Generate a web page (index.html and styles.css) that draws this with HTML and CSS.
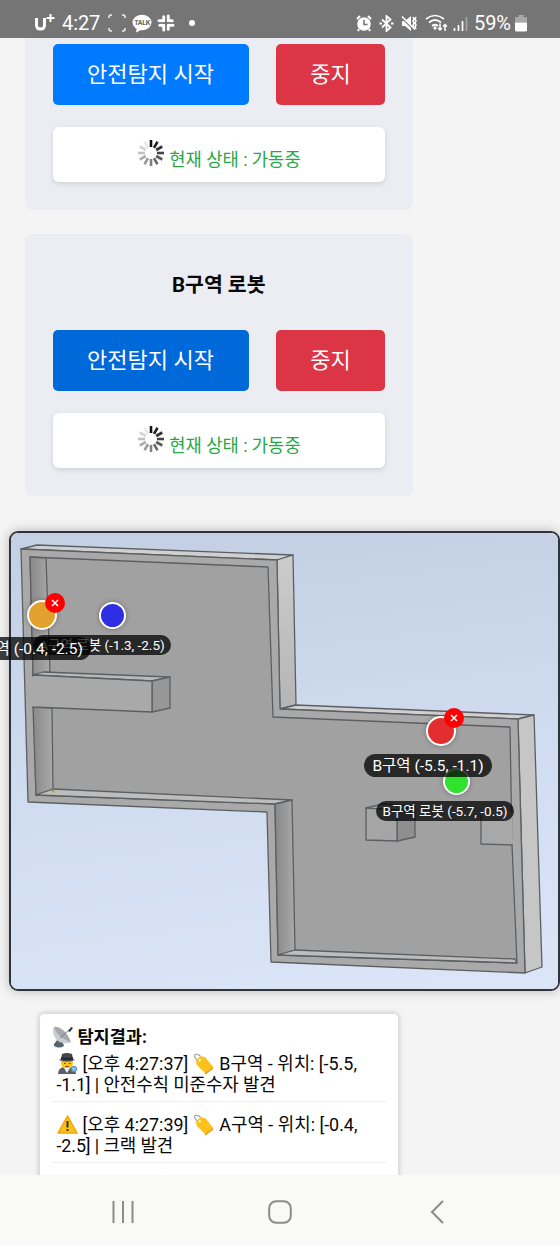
FILE: index.html
```html
<!DOCTYPE html>
<html lang="ko">
<head>
<meta charset="utf-8">
<title>로봇 안전탐지</title>
<link rel="stylesheet" href="styles.css">
</head>
<body>
<svg class="defs" width="0" height="0">
  <defs>
    <g id="spinner" stroke-width="2.6">
      <path d="M14 1v7" stroke="#111"/>
      <path d="M14 1v7" stroke="#222" transform="rotate(30 14 14)"/>
      <path d="M14 1v7" stroke="#333" transform="rotate(60 14 14)"/>
      <path d="M14 1v7" stroke="#444" transform="rotate(90 14 14)"/>
      <path d="M14 1v7" stroke="#5a5a5a" transform="rotate(120 14 14)"/>
      <path d="M14 1v7" stroke="#6c6c6c" transform="rotate(150 14 14)"/>
      <path d="M14 1v7" stroke="#808080" transform="rotate(180 14 14)"/>
      <path d="M14 1v7" stroke="#999" transform="rotate(210 14 14)"/>
      <path d="M14 1v7" stroke="#adadad" transform="rotate(240 14 14)"/>
      <path d="M14 1v7" stroke="#c0c0c0" transform="rotate(270 14 14)"/>
      <path d="M14 1v7" stroke="#d4d4d4" transform="rotate(300 14 14)"/>
      <path d="M14 1v7" stroke="#e8e8e8" transform="rotate(330 14 14)"/>
    </g>
    <g id="tag">
      <path d="M6 8C0 4 1 0 4 1c3 0 5 3 5 6" fill="none" stroke="#aaa" stroke-width="1.3"/>
      <path d="M3 7l5-4 5 1 8 10-8 7L4 12z" fill="#fcc21b"/>
      <path d="M12 21l9-7v2l-8 6z" fill="#e59b12"/>
      <circle cx="7" cy="7" r="1.3" fill="#fff5cf"/>
    </g>
  </defs>
</svg>

<header class="statusbar">
  <svg class="carrier" width="22" height="20" viewBox="0 0 22 20" fill="none" stroke="#fff"><path d="M2.500 5v7q0 4 4 4t4-4V5" stroke-width="3"/><path d="M16.500 1v8M12.500 5h8" stroke-width="2"/></svg>
  <span class="clock">4:27</span>
  <svg class="capture" width="18" height="18" viewBox="0 0 18 18" fill="none" stroke="#eee" stroke-width="1.500"><path d="M1 4V3q0-2 2-2h1M14 1h1q2 0 2 2v1M1 14v1q0 2 2 2h1M14 17h1q2 0 2-2v-1"/></svg>
  <svg class="talk" width="20" height="19" viewBox="0 0 20 19"><ellipse cx="10" cy="8.500" rx="9.500" ry="7.800" fill="#fff"/><path d="M5 13l-1 5.500 6-3z" fill="#fff"/><text x="10" y="11" text-anchor="middle" class="talk-text">TALK</text></svg>
  <svg class="slack" width="18" height="18" viewBox="0 0 18 18" stroke="#fff" stroke-width="3" stroke-linecap="round"><path d="M6.800 2.800v4M11.200 2v4.800M2 6.800h4.800M11.200 6.800h4M2.800 11.200h4M11.200 11.200H16M6.800 11.200V16M11.200 11.200v4"/><path d="M9 0v18M0 9h18" stroke="#757575" stroke-width="1"/></svg>
  <i class="more-dot"></i>
  <div class="status-right">
    <svg width="16" height="17" viewBox="0 0 16 17"><circle cx="8" cy="9" r="6.800" fill="#fff"/><path d="M1 4l3-3M15 4l-3-3M3 14l-1 2M13 14l1 2" stroke="#fff" stroke-width="2"/><path d="M8 5v4.500h3.500" fill="none" stroke="#707070" stroke-width="1.500"/></svg>
    <svg class="bt" width="15" height="17" viewBox="0 0 15 17" fill="none" stroke="#fff" stroke-width="1.800"><path d="M3 4.500l8.500 8L7.500 16V1l4 3.500L3 12.500"/><path d="M.5 8.500H3M12 8.500h2.500"/></svg>
    <svg class="mute" width="17" height="17" viewBox="0 0 17 17" fill="none" stroke="#fff" stroke-width="1.600"><path d="M1 6h3l6-5v15l-6-5H1z" fill="#fff" stroke="none"/><path d="M1 3l12 12" stroke="#757575" stroke-width="1.500"/><path d="M1 1.500l13 13"/><path d="M12 2l1 2-1 2 1 2-1 2 1 2M15 2l-1 2 1 2-1 2 1 2-1 2 1 2"/></svg>
    <svg class="wifi" width="23" height="18" viewBox="0 0 23 18" fill="none" stroke="#fff" stroke-width="1.700"><path d="M1 5q9-7 18 0M4 8.500q6-5 12 0M7 12q3-2.500 6 0"/><circle cx="10" cy="14" r=".8" fill="#fff"/><path d="M15 9.500V16m-2-2l2 2 2-2M20 17v-6.500m-2 2l2-2 2 2" stroke-width="1.500"/></svg>
    <svg class="signal" width="15" height="15" viewBox="0 0 15 15" stroke="#fff" stroke-width="1.700"><path d="M1.500 12v3M5.500 9v6M9.500 5v10"/><path d="M13.500 1v14" stroke="#a5a5a5"/></svg>
    <span class="percent">59%</span>
    <svg class="battery" width="12" height="17" viewBox="0 0 12 17"><path d="M3.500 0h5v2H11q1 0 1 1v4.500H0V3q0-1 1-1h2.500z" fill="#a8a8a8"/><path d="M0 7.500h12V15q0 1.500-1.500 1.500h-9Q0 16.500 0 15z" fill="#fff"/></svg>
  </div>
</header>

<main class="page">
  <section class="card card-cut">
    <div class="actions"><button class="btn start">안전탐지 시작</button><button class="btn stop">중지</button></div>
    <div class="state"><svg width="28" height="28" viewBox="0 0 28 28"><use href="#spinner"/></svg><span>현재 상태 : 가동중</span></div>
  </section>

  <section class="card">
    <h2>B구역 로봇</h2>
    <div class="actions"><button class="btn start pressed">안전탐지 시작</button><button class="btn stop">중지</button></div>
    <div class="state"><svg width="28" height="28" viewBox="0 0 28 28"><use href="#spinner"/></svg><span>현재 상태 : 가동중</span></div>
  </section>

  <section class="map">
    <svg class="plan" width="547" height="456" viewBox="11 533 547 456">
      <defs>
        <linearGradient id="sky" x1=".6" y1="0" x2=".75" y2="1"><stop offset="0" stop-color="#c4d1e5"/><stop offset=".5" stop-color="#d0dcef"/><stop offset="1" stop-color="#dae5f8"/></linearGradient>
        <linearGradient id="wall" x1="0" x2="1"><stop offset="0" stop-color="#888"/><stop offset="1" stop-color="#aaa"/></linearGradient>
        <linearGradient id="side" x1="0" y1="0" x2="0" y2="1"><stop offset="0" stop-color="#ccc"/><stop offset="1" stop-color="#b5b5b5"/></linearGradient>
      </defs>
      <rect x="11" y="533" width="547" height="456" fill="url(#sky)"/>
      <g stroke="#5c5f62" stroke-width="1.300" stroke-linejoin="round">
        <path d="M21 549L37 545 293 555 277 560z" fill="#d0d0d0"/>
        <path d="M277 560L293 555 296 705 280 709z" fill="url(#side)"/>
        <path d="M280 709L296 705 534 715 518 719z" fill="#d0d0d0"/>
        <path d="M518 719L534 715 542 967 525 973z" fill="#c6c6c6"/>
        <path d="M21 549L277 560 280 709 518 719 525 973 271 962 267 812 28 802z" fill="#a9a9a9"/>
        <path d="M30 557L268 567 273 717 510 727 512 845 517 963 278 955 275 804 36 795z" fill="#a1a1a1"/>
        <path d="M30 557l16 1 4 114-17 3z" fill="url(#wall)"/>
        <path d="M33 707l19 1 1 81-17 6z" fill="url(#wall)"/>
        <path d="M36 795l17-6 239 11-17 4z" fill="#bdbdbd"/>
        <path d="M275 804l17-4 3 150-17 5z" fill="url(#wall)"/>
        <path d="M278 955l17-5 220 9 2 4z" fill="#bdbdbd"/>
        <path d="M33 675l10-3 127 5-18 4z" fill="#b9b9b9"/>
        <path d="M152 681l18-4v31l-18 4z" fill="#979797"/>
        <path d="M33 675l119 6v31l-119-5z" fill="#a9a9a9"/>
        <path d="M481 810l29-83 7 3-4 115-32-1z" fill="none" stroke="none"/>
        <path d="M481 812l30 1 1 32-31-1z" fill="#a8a8a8" stroke="none"/>
        <path d="M510.500 812l1 32" stroke="#a8a8a8" stroke-width="3"/>
        <path d="M481 815v29l31 1" fill="none"/>
        <path d="M366 808l17-4 32 2-18 4z" fill="#b5b5b5"/>
        <path d="M397 810l18-4v31l-18 4z" fill="#8f8f8f"/>
        <path d="M366 808l31 2v31l-31-1z" fill="#a5a5a5"/>
      </g>
      <path d="M27.500 678v28l7 .5V676z" fill="#a9a9a9"/>
      <circle cx="53" cy="791" r="1.500" fill="#a4a43d"/>
    </svg>
    <i class="pin robot blue"></i>
    <i class="pin robot green"></i>
    <i class="pin zone orange"></i>
    <i class="pin zone red"></i>
    <span class="label small label-a-robot">A구역 로봇 (-1.3, -2.5)</span>
    <span class="label small label-b-robot">B구역 로봇 (-5.7, -0.5)</span>
    <span class="label label-a">A구역 (-0.4, -2.5)</span>
    <span class="label label-b">B구역 (-5.5, -1.1)</span>
    <span class="close close-a"><svg width="8" height="8" viewBox="0 0 8 8"><path d="M1 1l6 6M7 1L1 7" stroke="#fff" stroke-width="1.500"/></svg></span>
    <span class="close close-b"><svg width="8" height="8" viewBox="0 0 8 8"><path d="M1 1l6 6M7 1L1 7" stroke="#fff" stroke-width="1.500"/></svg></span>
  </section>

  <section class="log">
    <h3><svg width="22" height="22" viewBox="0 0 22 22"><path d="M2 18l4-5 5 4 1 3q-5 3-10 0z" fill="#536570"/><path d="M2 1C-1 6 3 16 11 17q5 1 8-1z" fill="#c9cdd0"/><path d="M2 1q2 6 7 10t10 5Q16 8 11 4T2 1z" fill="#a3a9ad"/><path d="M8 12l9-8" fill="none" stroke="#777f84"/><path d="M16 5l3-4 2 1-3 4z" fill="#363c40"/></svg><span>탐지결과:</span></h3>
    <div class="entry">
      <div class="line"><svg width="21" height="21" viewBox="0 0 21 21"><path d="M1 21q0-6 6-7h6q6 1 6 7z" fill="#596066"/><circle cx="10" cy="10" r="6" fill="#fcc21b"/><path d="M7 15h6l-3 5z" fill="#eee"/><path d="M4 6L5 1q5-2 10 0l1 5 2 1q-8 3-16 0z" fill="#3f474c"/><path d="M4 5q6 2 12 0" fill="none" stroke="#1d2225" stroke-width="1.500"/><path d="M7 10.500h1.500M12 10.500h1.500M8.500 13.500h3" stroke="#553c22"/><circle cx="17" cy="16" r="2.700" fill="#82c5e8" stroke="#5b8daa"/></svg><span>[오후 4:27:37]</span><svg width="21" height="22" viewBox="0 0 22 22"><use href="#tag"/></svg><span>B구역 - 위치: [-5.5,</span></div>
      <div class="line tight"><span>-1.1] | 안전수칙 미준수자 발견</span></div>
    </div>
    <div class="entry second">
      <div class="line"><svg width="21" height="19" viewBox="0 0 21 19"><path d="M10.500 1L20 18H1z" fill="#fcc21b" stroke="#f2a600" stroke-width="1.500" stroke-linejoin="round"/><path d="M10.500 6v6.500M10.500 14v2" stroke="#333" stroke-width="2"/></svg><span>[오후 4:27:39]</span><svg width="21" height="22" viewBox="0 0 22 22"><use href="#tag"/></svg><span>A구역 - 위치: [-0.4,</span></div>
      <div class="line tight"><span>-2.5] | 크랙 발견</span></div>
    </div>
  </section>
</main>

<nav class="navbar">
  <svg width="22" height="24" viewBox="0 0 22 24" stroke="#8b8b8b" stroke-width="2"><path d="M1.500 1v22M11 1v22M20.500 1v22"/></svg>
  <svg class="home" width="24" height="24" viewBox="0 0 24 24" fill="none" stroke="#8b8b8b" stroke-width="2"><rect x="1.200" y="1.200" width="21.600" height="21.600" rx="7"/></svg>
  <svg width="14" height="24" viewBox="0 0 14 24" fill="none" stroke="#8b8b8b" stroke-width="2"><path d="M13 1L2 12l11 11"/></svg>
</nav>
</body>
</html>
```
FILE: styles.css
```css
* { box-sizing: border-box; }
body {
  margin: 0;
  width: 560px;
  height: 1245px;
  overflow: hidden;
  background: #f4f4f4;
  color: #080808;
  font-family: Roboto, "Noto Sans CJK KR", sans-serif;
}
svg { display: block; flex: none; }
.defs { position: absolute; }

.statusbar {
  height: 38px;
  padding: 8px 33px 0 34px;
  display: flex;
  align-items: center;
  background: #757575;
  color: #fff;
}
.clock { width: 39px; margin-left: 6px; font-size: 20px; letter-spacing: -.1px; line-height: 24px; white-space: nowrap; }
.capture { margin-left: 7px; }
.talk { margin-left: 6px; }
.talk-text { font: bold 7px Roboto, sans-serif; letter-spacing: -.3px; fill: #666; }
.slack { margin-left: 5px; }
.more-dot { width: 6px; height: 6px; margin-left: 14px; border-radius: 50%; background: #fff; }
.status-right { display: flex; align-items: center; margin-left: auto; }
.bt { margin-left: 7px; }
.mute { margin-left: 7px; }
.wifi { margin-left: 7px; }
.signal { margin-left: 5px; }
.percent { width: 37px; margin-left: 6px; font-size: 20px; letter-spacing: -.1px; line-height: 24px; white-space: nowrap; }
.battery { margin-left: 4px; }

.page { height: 1137px; overflow: hidden; }
.card {
  width: 388px;
  height: 262px;
  margin: 24px 0 0 25px;
  padding: 37px 28px 28px 27.5px;
  border-radius: 8px;
  background: #ecedf2;
}
.card-cut { height: 172px; margin-top: 0; padding-top: 6px; border-radius: 0 0 8px 8px; }
.card h2 { margin: 0 0 31px; font-size: 20.500px; font-weight: 700; line-height: 28px; text-align: center; }
.actions { display: flex; gap: 27.500px; height: 61px; }
.btn {
  border: 0;
  border-radius: 5px;
  padding: 0;
  color: #fff;
  font: 400 22px/61px Roboto, "Noto Sans CJK KR", sans-serif;
}
.start { width: 196px; background: #007bff; }
.pressed { background: #0069d9; }
.stop { width: 109px; background: #dc3545; }
.state {
  height: 55px;
  margin-top: 22px;
  padding-bottom: 3px;
  display: flex;
  align-items: center;
  justify-content: center;
  gap: 4.500px;
  border-radius: 6px;
  background: #fff;
  box-shadow: 0 2px 5px rgba(0,0,0,.12);
  color: #28a745;
  font-size: 17.700px;
}
.state span { padding-top: 13px; line-height: 26px; white-space: nowrap; }

.map {
  position: relative;
  width: 551px;
  height: 460px;
  margin: 35px 0 0 9px;
  border: 2px solid #30343a;
  border-radius: 9px;
  box-shadow: 0 0 12px rgba(0,0,0,.25);
}
.plan { border-radius: 7px; }
.pin { position: absolute; border: 2px solid #fff; border-radius: 50%; box-shadow: 0 0 5px rgba(0,0,0,.3); }
.robot { width: 27px; height: 27px; }
.zone { width: 30px; height: 30px; }
.blue { left: 88px; top: 69px; background: #2e2ee2; }
.green { left: 432px; top: 235px; background: #2ee22e; }
.orange { left: 16px; top: 67px; background: #e2a12e; }
.red { left: 415px; top: 183px; background: #e22e2e; }
.label {
  position: absolute;
  width: 128px;
  height: 23px;
  border-radius: 12px;
  background: rgba(0,0,0,.75);
  color: #fff;
  font-size: 15.500px;
  line-height: 24px;
  text-align: center;
  white-space: nowrap;
}
.small { width: 138px; height: 20px; font-size: 13.500px; line-height: 20px; }
.label-a-robot { left: 22px; top: 102px; }
.label-b-robot { left: 365px; top: 268px; }
.label-a { left: -48px; top: 104px; }
.label-b { left: 353px; top: 221px; }
.close {
  position: absolute;
  width: 20px;
  height: 20px;
  display: grid;
  place-items: center;
  border-radius: 50%;
  background: #f00;
}
.close-a { left: 34px; top: 60px; }
.close-b { left: 433px; top: 175px; }

.log {
  width: 360px;
  height: 220px;
  margin: 22px 0 0 38.5px;
  padding: 11px 12px;
  border: 1px solid #ddd;
  border-radius: 5px;
  background: #fff;
  box-shadow: 0 0 5px rgba(0,0,0,.2);
}
.log h3 { display: flex; align-items: center; gap: 4px; height: 24px; margin: 0; font-size: 17.500px; font-weight: 700; }
.log h3 span { line-height: 24px; }
.entry { height: 53px; padding: 4px 0 0 5px; border-bottom: 1px solid #eee; }
.second { height: 61px; padding-top: 12px; }
.line { display: flex; align-items: center; gap: 5px; height: 21px; font-size: 17.900px; line-height: 21px; white-space: nowrap; }
.tight { letter-spacing: -.1px; }

.navbar {
  height: 70px;
  padding: 3px 116px 0 112px;
  display: flex;
  align-items: center;
  justify-content: space-between;
  background: #f9f9f8;
}
.home { margin-right: 4px; }
```
